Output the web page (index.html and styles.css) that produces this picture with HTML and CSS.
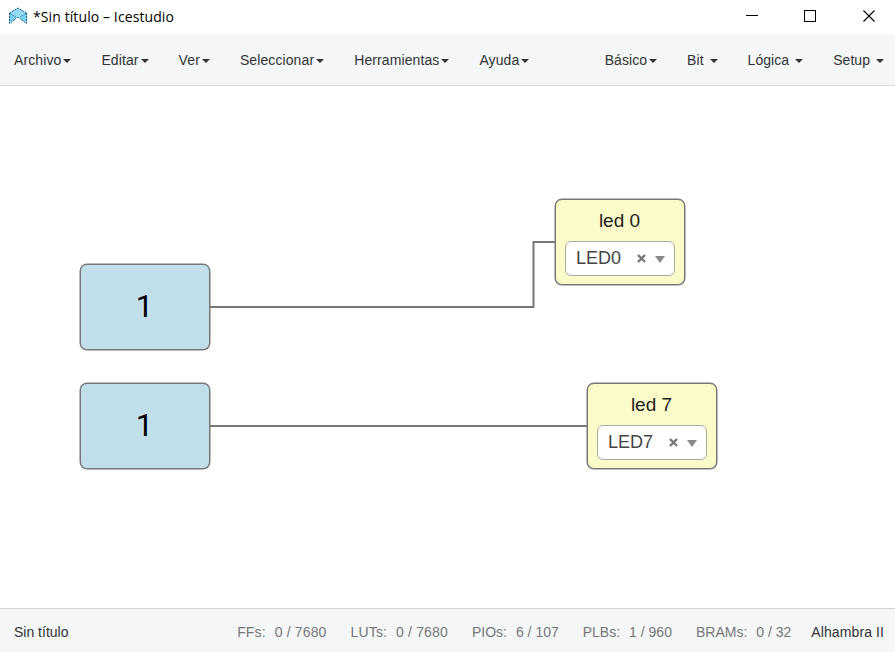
FILE: index.html
```html
<!DOCTYPE html>
<html lang="es">
<head>
<meta charset="utf-8">
<title>*Sin título – Icestudio</title>
<link rel="stylesheet" href="styles.css">
</head>
<body>
<header class="titlebar">
  <svg class="logo" width="20" height="18" viewBox="0 0 20 18">
    <path d="M1 6 10 1l9 5v10.500l-6-4-1.500-2h-3L7 12.500l-6 4z" fill="#7bd0f2"/>
    <path d="M2 6 10 1.500 18 6l-6 4H8z" fill="#93dcf8"/>
    <path d="M1.500 6v10.500L7 12.500M18.500 6v10.500L13 12.500M1.500 6 10 1l8.500 5" fill="none" stroke="#2c647e" stroke-dasharray="2 1"/>
    <path d="M2 6.500l6 3.500M18 6.500l-6 3.500M7 12.500l1.500-2h3l1.500 2" fill="none" stroke="#3e87a8" stroke-dasharray="2 1"/>
  </svg>
  <span class="title">*Sin título – Icestudio</span>
  <svg class="controls" width="130" height="14" viewBox="0 0 130 14" fill="none" stroke="#000" shape-rendering="crispEdges">
    <path d="M1 6.500h12M59.500 1.500h11v11h-11z"/>
    <path d="M118.500 1.500l11 11M129.500 1.500l-11 11" shape-rendering="auto" stroke-width="1.100"/>
  </svg>
</header>
<nav class="menubar">
  <ul class="menu">
    <li>Archivo<i class="caret"></i></li>
    <li>Editar<i class="caret"></i></li>
    <li>Ver<i class="caret"></i></li>
    <li>Seleccionar<i class="caret"></i></li>
    <li>Herramientas<i class="caret"></i></li>
    <li>Ayuda<i class="caret"></i></li>
  </ul>
  <ul class="menu menu-right">
    <li>Básico<i class="caret"></i></li>
    <li>Bit <i class="caret"></i></li>
    <li>Lógica <i class="caret"></i></li>
    <li>Setup <i class="caret"></i></li>
  </ul>
</nav>
<main class="canvas">
  <svg class="wires" width="895" height="522" viewBox="0 0 895 522">
    <path d="M209 221H533.500V156H556M209 340H588"/>
  </svg>
  <div class="block constant bit-a">1</div>
  <div class="block constant bit-b">1</div>
  <div class="block output led-a">
    <div class="label">led 0</div>
    <div class="select"><span>LED0</span>
      <svg width="9" height="9" viewBox="0 0 9 9"><path d="M1 1l7 7M8 1l-7 7"/></svg><i class="arrow"></i></div>
  </div>
  <div class="block output led-b">
    <div class="label">led 7</div>
    <div class="select"><span>LED7</span>
      <svg width="9" height="9" viewBox="0 0 9 9"><path d="M1 1l7 7M8 1l-7 7"/></svg><i class="arrow"></i></div>
  </div>
</main>
<footer class="statusbar">
  <span class="project">Sin título</span>
  <div class="stats">
    <span class="wide">FFs:<b>0 / 7680</b></span>
    <span class="wide">LUTs:<b>0 / 7680</b></span>
    <span>PIOs:<b>6 / 107</b></span>
    <span>PLBs:<b>1 / 960</b></span>
    <span>BRAMs:<b>0 / 32</b></span>
  </div>
  <span class="board">Alhambra II</span>
</footer>
</body>
</html>
```
FILE: styles.css
```css
* { box-sizing: border-box; }
body {
  margin: 0;
  height: 652px;
  display: flex;
  flex-direction: column;
  overflow: hidden;
  background: #fff;
  color: #333;
  font: 14px/20px "Liberation Sans", Arial, sans-serif;
}
.titlebar {
  height: 35px;
  display: flex;
  align-items: center;
  padding: 0 20px 3px 8px;
}
.logo { margin-right: 5px; }
.title {
  padding-top: 1px;
  color: #000;
  font: 14px/20px "Open Sans", "Noto Sans", sans-serif;
  letter-spacing: 0.1px;
  white-space: nowrap;
}
.controls { margin-left: auto; }
.menubar {
  height: 51px;
  display: flex;
  justify-content: space-between;
  align-items: center;
  padding: 0 11px 0 14px;
  background: #f4f6f8;
  border-bottom: 1px solid #d3d8da;
}
.menu {
  display: flex;
  gap: 30px;
  margin: 0;
  padding: 0;
  list-style: none;
  letter-spacing: 0.1px;
}
.menu-right { letter-spacing: 0.06px; }
.menu li { white-space: nowrap; }
.caret {
  display: inline-block;
  margin-left: 2px;
  vertical-align: middle;
  border: 4px solid transparent;
  border-top-color: #333;
  border-bottom: 0;
}
.canvas { position: relative; height: 522px; }
.wires { position: absolute; left: 0; top: 0; }
.wires path { fill: none; stroke: #777; stroke-width: 2; }
.block {
  position: absolute;
  width: 130px;
  height: 86px;
  background-clip: padding-box;
  border: 1px solid #777;
  border-radius: 7px;
  box-shadow: 0 0 0 0.500px #777;
}
.constant {
  display: flex;
  align-items: center;
  justify-content: center;
  padding: 0 1px 1px 0;
  background: #c0dfea;
  color: #000;
  font: 31px/36px Roboto, sans-serif;
}
.output { padding: 9px 9px 8px; background: #fbfac9; }
.bit-a { left: 80px; top: 178px; }
.bit-b { left: 80px; top: 297px; }
.led-a { left: 555px; top: 113px; }
.led-b { left: 587px; top: 297px; }
.label {
  height: 32px;
  padding-right: 1px;
  line-height: 23px;
  text-align: center;
  color: #222;
  font-size: 19px;
}
.select {
  display: flex;
  align-items: center;
  height: 35px;
  padding: 0 0 1px 10px;
  background: #fff;
  border: 1px solid #aaa;
  border-radius: 6px;
  color: #444;
  font-size: 18px;
}
.select span { width: 61px; }
.select svg { fill: none; stroke: #777; stroke-width: 2.400; }
.arrow {
  margin: 3px 0 0 9px;
  border: 5.500px solid transparent;
  border-top: 7px solid #888;
  border-bottom: 0;
}
.statusbar {
  height: 44px;
  display: flex;
  align-items: center;
  padding: 3px 11px 0 14px;
  background: #f4f6f8;
  border-top: 1px solid #d0d6dc;
  white-space: nowrap;
}
.stats {
  display: flex;
  gap: 24px;
  margin-left: auto;
  margin-right: 20px;
  color: #777;
}
.stats b { margin-left: 9px; font-weight: normal; }
.stats .wide { letter-spacing: 0.15px; }
.board { letter-spacing: 0.1px; }
```
